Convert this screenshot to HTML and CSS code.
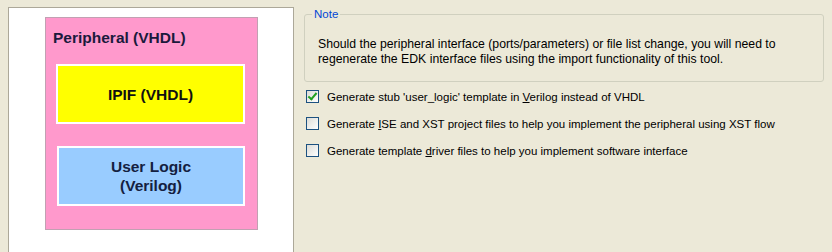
FILE: index.html
```html
<!DOCTYPE html>
<html>

<head>
	<title>Peripheral options</title>
	<meta charset='utf-8' />
	<link rel="stylesheet" href="styles.css">
</head>

<body>
	<div class="page">
		<div class="preview">
			<div class="periph">
				<div class="periph-title">Peripheral (VHDL)</div>
				<div class="block ipif">IPIF (VHDL)</div>
				<div class="block logic">User Logic<br />(Verilog)</div>
			</div>
		</div>
		<div class="options">
			<fieldset class="note">
				<legend>Note</legend>
				<p>Should the peripheral interface (ports/parameters) or file list change, you will need to<br />
					regenerate the EDK interface files using the import functionality of this tool.</p>
			</fieldset>
			<ul class="checks">
				<li><span class="box checked"></span><span>Generate stub 'user_logic' template in <u>V</u>erilog instead of VHDL</span></li>
				<li><span class="box"></span><span>Generate <u>I</u>SE and XST project files to help you implement the peripheral using XST flow</span></li>
				<li><span class="box"></span><span>Generate template <u>d</u>river files to help you implement software interface</span></li>
			</ul>
		</div>
	</div>
</body>

</html>
```

FILE: styles.css
```css
body {
	margin: 0;
	background: #ece9d8;
	font-family: "Liberation Sans", Arial, sans-serif;
	font-size: 12px;
	color: #000;
}

.page {
	display: flex;
	width: 832px;
	height: 252px;
}

.preview {
	width: 284px;
	height: 235px;
	margin: 7px 0 0 8px;
	background: #fff;
	border: 1px solid #aca899;
	padding-top: 9px;
	box-sizing: content-box;
}

.periph {
	width: 211px;
	height: 211px;
	margin-left: 36px;
	background: #ff99cc;
	border: 1px solid #c2a0b2;
	box-sizing: content-box;
}

.periph-title {
	font-weight: bold;
	font-size: 15.5px;
	color: #1a1a3c;
	padding: 11px 0 0 7px;
	height: 22px;
}

.block {
	width: 185px;
	height: 56px;
	margin: 0 0 0 10px;
	border: 2px solid #fff;
	display: flex;
	align-items: center;
	justify-content: center;
	text-align: center;
	font-weight: bold;
	font-size: 15.5px;
	line-height: 19px;
	color: #111;
	box-sizing: content-box;
}

.ipif {
	background: #ffff00;
	margin-top: 13px;
}

.logic {
	background: #99ccff;
	margin-top: 22px;
	margin-left: 11px;
	width: 184px;
	color: #142040;
}

.options {
	margin-left: 10px;
	width: 520px;
}

.note {
	margin: 8px 0 0 0;
	padding: 17px 12px 14px 13px;
	border: 1px solid #d0d0bf;
	border-radius: 3px;
	width: 493px;
}

.note legend {
	color: #0046d5;
	font-size: 11.5px;
	padding: 0 2px;
	margin-left: -6px;
}

.note p {
	margin: 0;
	font-size: 12.25px;
	line-height: 15px;
}

.checks {
	list-style: none;
	margin: 1px 0 0 0;
	padding: 0;
}

.checks li {
	display: flex;
	align-items: center;
	height: 27px;
	font-size: 11.5px;
}

.box {
	width: 11px;
	height: 11px;
	border: 1px solid #1c5180;
	background: linear-gradient(135deg, #dcdcd7, #fff);
	margin: 0 8px 0 2px;
	position: relative;
}

.box.checked::after {
	content: "";
	position: absolute;
	left: 3px;
	top: 0;
	width: 3px;
	height: 7px;
	border: solid #21a121;
	border-width: 0 2.5px 2.5px 0;
	transform: rotate(40deg);
}

u {
	text-decoration: underline;
}
```
